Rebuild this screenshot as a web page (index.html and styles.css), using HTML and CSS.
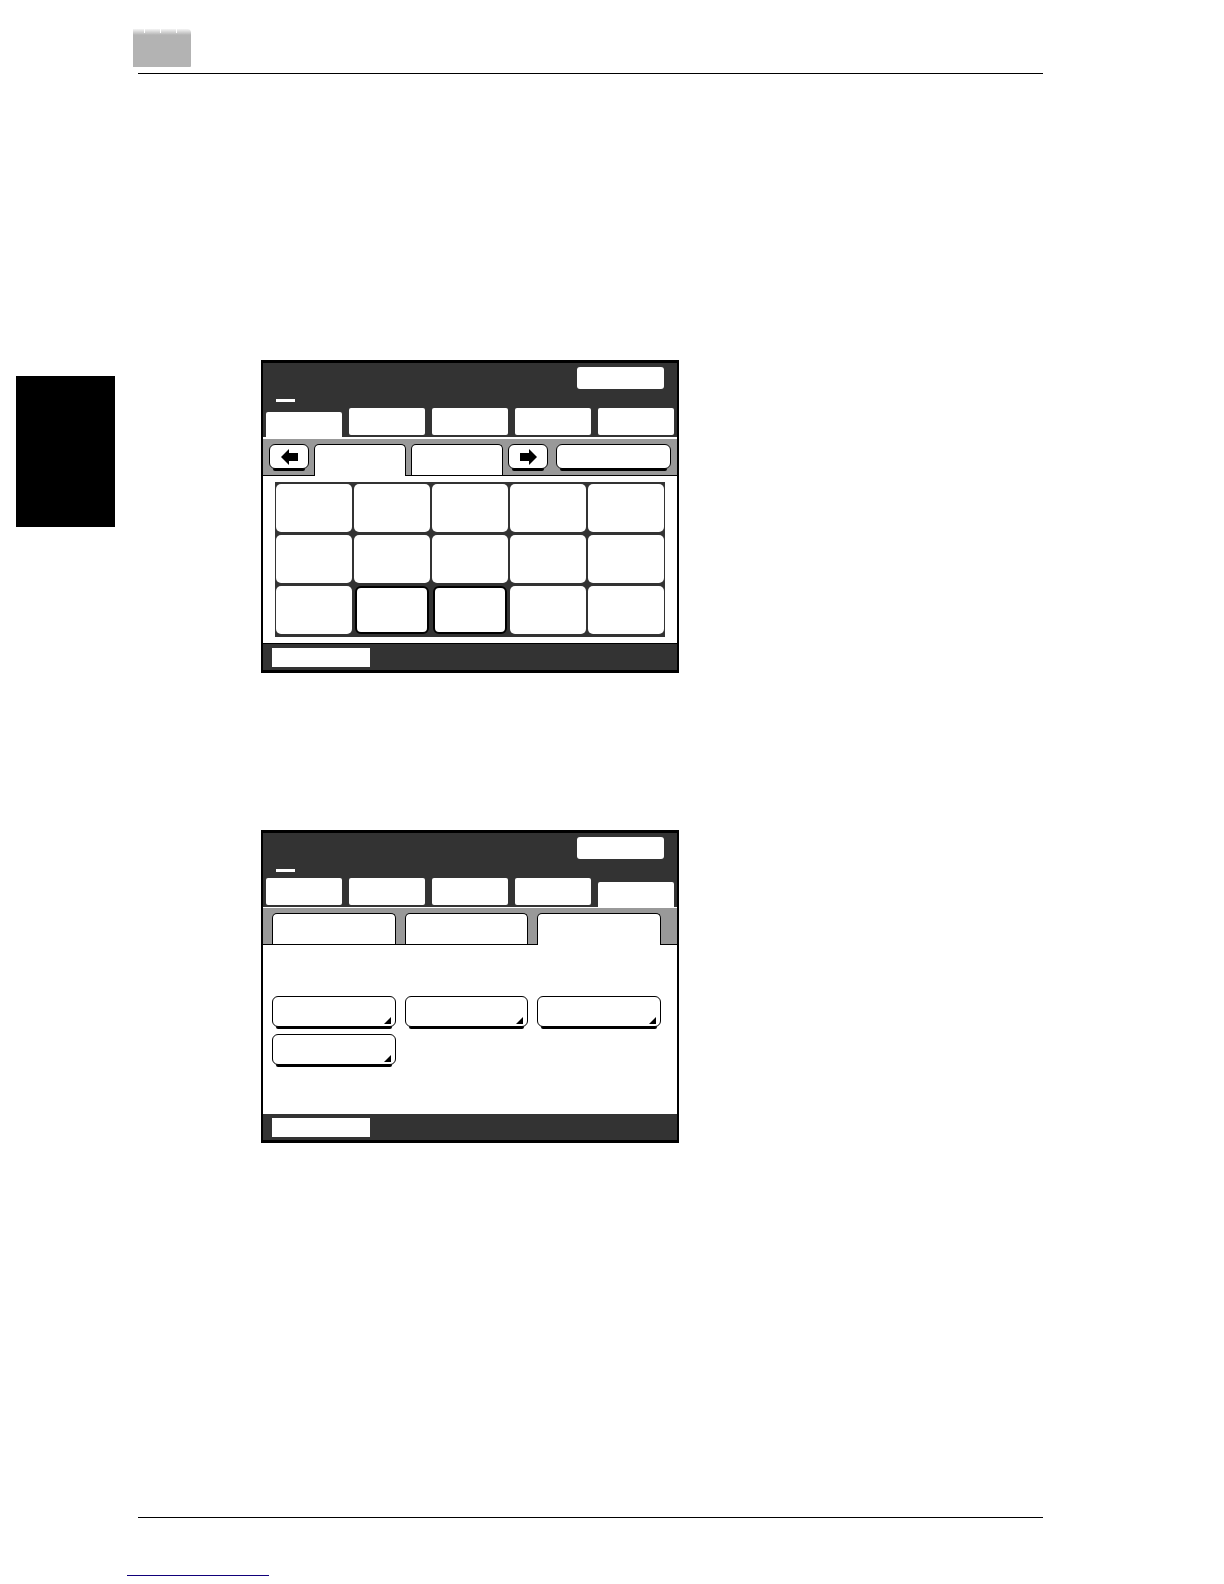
FILE: index.html
```
<!DOCTYPE html>
<html lang="en">
<head>
  <meta charset="UTF-8">
  <title>Touch Panel Screens</title>
  <link rel="stylesheet" href="styles.css">
</head>
<body>
  <header class="page_header">
    <div class="page_badge"></div>
  </header>

  <main class="page_body">
    <aside class="side_tab"></aside>

    <div class="screens">
      <section class="screen">
        <div class="screen_top">
          <span class="cursor"></span>
          <button type="button" class="top_btn" aria-label="Status"></button>
        </div>
        <nav class="main_tabs">
          <button type="button" class="main_tab active" aria-label="Tab 1"></button>
          <button type="button" class="main_tab" aria-label="Tab 2"></button>
          <button type="button" class="main_tab" aria-label="Tab 3"></button>
          <button type="button" class="main_tab" aria-label="Tab 4"></button>
          <button type="button" class="main_tab" aria-label="Tab 5"></button>
        </nav>
        <div class="sub_bar">
          <button type="button" class="key arrow_btn" aria-label="Previous">
            <svg width="17" height="16" viewBox="0 0 17 16"><path d="M0 8L8 0V4H17V12H8V16Z"/></svg>
          </button>
          <div class="sub_tabs">
            <button type="button" class="sub_tab active" aria-label="Index 1"></button>
            <button type="button" class="sub_tab" aria-label="Index 2"></button>
          </div>
          <button type="button" class="key arrow_btn" aria-label="Next">
            <svg width="17" height="16" viewBox="0 0 17 16"><path d="M17 8L9 0V4H0V12H9V16Z"/></svg>
          </button>
          <button type="button" class="key search_btn" aria-label="Search"></button>
        </div>
        <div class="panel">
          <div class="cells">
            <button type="button" class="cell" aria-label="Key 1"></button>
            <button type="button" class="cell" aria-label="Key 2"></button>
            <button type="button" class="cell" aria-label="Key 3"></button>
            <button type="button" class="cell" aria-label="Key 4"></button>
            <button type="button" class="cell" aria-label="Key 5"></button>
            <button type="button" class="cell" aria-label="Key 6"></button>
            <button type="button" class="cell" aria-label="Key 7"></button>
            <button type="button" class="cell" aria-label="Key 8"></button>
            <button type="button" class="cell" aria-label="Key 9"></button>
            <button type="button" class="cell" aria-label="Key 10"></button>
            <button type="button" class="cell" aria-label="Key 11"></button>
            <button type="button" class="cell selected" aria-label="Key 12"></button>
            <button type="button" class="cell selected" aria-label="Key 13"></button>
            <button type="button" class="cell" aria-label="Key 14"></button>
            <button type="button" class="cell" aria-label="Key 15"></button>
          </div>
        </div>
        <div class="screen_bottom lined">
          <div class="memory"></div>
        </div>
      </section>

      <section class="screen">
        <div class="screen_top">
          <span class="cursor"></span>
          <button type="button" class="top_btn" aria-label="Status"></button>
        </div>
        <nav class="main_tabs">
          <button type="button" class="main_tab" aria-label="Tab 1"></button>
          <button type="button" class="main_tab" aria-label="Tab 2"></button>
          <button type="button" class="main_tab" aria-label="Tab 3"></button>
          <button type="button" class="main_tab" aria-label="Tab 4"></button>
          <button type="button" class="main_tab active" aria-label="Tab 5"></button>
        </nav>
        <div class="sub_bar wide">
          <button type="button" class="sub_tab" aria-label="Menu 1"></button>
          <button type="button" class="sub_tab" aria-label="Menu 2"></button>
          <button type="button" class="sub_tab active" aria-label="Menu 3"></button>
        </div>
        <div class="panel options">
          <button type="button" class="key option" aria-label="Option 1">
            <svg width="7" height="7" viewBox="0 0 7 7"><path d="M7 0V7H0Z"/></svg>
          </button>
          <button type="button" class="key option" aria-label="Option 2">
            <svg width="7" height="7" viewBox="0 0 7 7"><path d="M7 0V7H0Z"/></svg>
          </button>
          <button type="button" class="key option" aria-label="Option 3">
            <svg width="7" height="7" viewBox="0 0 7 7"><path d="M7 0V7H0Z"/></svg>
          </button>
          <button type="button" class="key option" aria-label="Option 4">
            <svg width="7" height="7" viewBox="0 0 7 7"><path d="M7 0V7H0Z"/></svg>
          </button>
        </div>
        <div class="screen_bottom">
          <div class="memory"></div>
        </div>
      </section>
    </div>
  </main>

  <footer class="page_footer">
    <a href="#" class="footer_link" aria-label="Back to top"></a>
  </footer>
</body>
</html>
```
FILE: styles.css
```
* {
	box-sizing: border-box;
}

body {
	margin: 0;
	min-height: 100vh;
	display: flex;
	flex-direction: column;
	background-color: white;
	font-family: "Liberation Sans", Arial, sans-serif;
}

button {
	margin: 0;
	padding: 0;
	border: none;
	background-color: white;
	cursor: pointer;
}

/* page frame */
.page_header {
	padding-top: 29px;
	margin: 0 181px 0 138px;
	border-bottom: 1px solid black;
}

.page_badge {
	width: 58px;
	height: 38px;
	margin: 0 0 6px -5px;
	border-radius: 0 4px 1px 0;
	background:
		repeating-linear-gradient(90deg, transparent 0 11px, white 11px 12px, transparent 12px 16px) 0 0 / 100% 4px no-repeat,
		linear-gradient(#f4f4f4, #b3b3b3 6px);
}

.page_body {
	flex: 1;
	display: flex;
	align-items: flex-start;
	gap: 146px;
	padding: 286px 181px 0 16px;
}

.side_tab {
	flex: none;
	width: 99px;
	height: 151px;
	margin-top: 16px;
	background-color: black;
}

.screens {
	flex: 1;
	max-width: 418px;
	display: flex;
	flex-direction: column;
	gap: 157px;
}

.page_footer {
	margin: 0 181px 0 138px;
	padding: 56px 0 8px;
	border-top: 1px solid black;
}

.footer_link {
	display: block;
	width: 142px;
	height: 2px;
	margin-left: -11px;
	border-bottom: 1px solid #11007a;
}

/* touch screen */
.screen {
	border: 2px solid black;
	border-width: 3px 2px;
}

.screen_top {
	display: flex;
	justify-content: space-between;
	align-items: flex-start;
	height: 45px;
	padding: 4px 13px 6px;
	background-color: #333;
}

.cursor {
	align-self: flex-end;
	width: 19px;
	height: 3px;
	background-color: white;
}

.top_btn {
	width: 87px;
	height: 22px;
	border-radius: 3px;
}

.main_tabs {
	display: flex;
	gap: 7px;
	height: 29px;
	padding: 0 3px;
	background-color: #333;
}

.main_tab {
	flex: 1;
	height: 27px;
	border-radius: 2px;
}

.main_tab.active {
	align-self: flex-end;
	height: 25px;
	border-radius: 2px 2px 0 0;
}

.sub_bar {
	display: flex;
	gap: 5px;
	padding: 5px 6px 0;
	border-top: 2px solid white;
	border-bottom: 1px solid black;
	background-color: #999;
}

.sub_bar.wide {
	gap: 9px;
	padding: 5px 16px 0 9px;
	border-top-width: 1px;
}

.sub_tabs {
	flex: 1;
	display: flex;
	gap: 5px;
}

.sub_tab {
	flex: 1;
	height: 31px;
	border: 1px solid black;
	border-bottom: none;
	border-radius: 5px 5px 0 0;
}

/* the open tab hides the line under the bar */
.sub_tab.active {
	height: 32px;
	margin-bottom: -1px;
}

.key {
	border: 1px solid black;
	border-radius: 6px;
	box-shadow: 0 6px 0 -4px black;
}

.arrow_btn {
	display: flex;
	align-items: center;
	justify-content: center;
	width: 40px;
	height: 25px;
}

.search_btn {
	width: 115px;
	height: 25px;
	margin-left: 3px;
}

.panel {
	padding: 6px 12px;
	background-color: white;
}

.cells {
	display: grid;
	grid-template-columns: repeat(5, 1fr);
	gap: 3px 2px;
	padding: 2px 1px 3px;
	background-color: #333;
}

.cell {
	height: 48px;
	border-radius: 5px;
}

.cell.selected {
	margin: 0 1px;
	border: 2px solid black;
	border-radius: 6px;
}

.options {
	display: grid;
	grid-template-columns: repeat(3, 1fr);
	gap: 7px 9px;
	padding: 51px 16px 49px 9px;
}

.option {
	display: flex;
	align-items: flex-end;
	justify-content: flex-end;
	height: 31px;
	padding: 0 4px 2px;
}

.screen_bottom {
	padding: 4px 9px 3px;
	background-color: #333;
}

.screen_bottom.lined {
	border-top: 1px solid black;
}

.memory {
	width: 98px;
	height: 19px;
	background-color: white;
}
```
